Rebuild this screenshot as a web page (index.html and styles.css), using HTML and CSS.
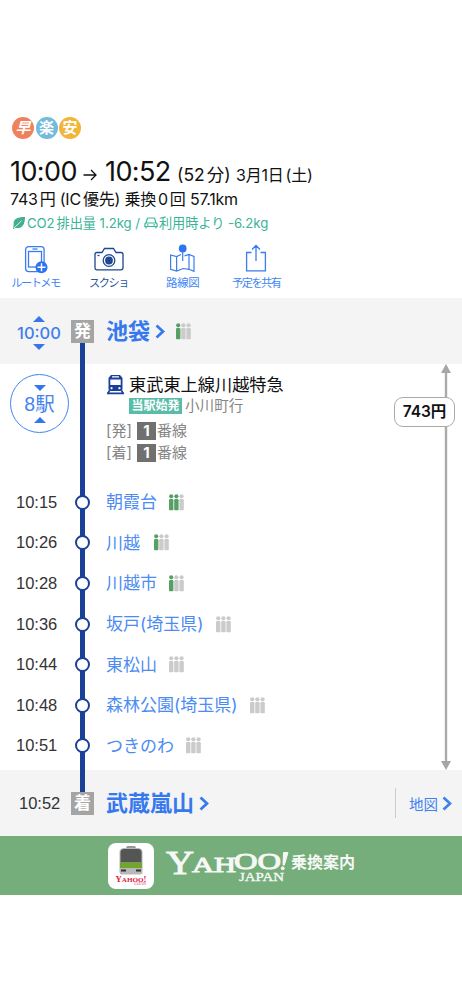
FILE: index.html
```html
<!DOCTYPE html>
<html lang="ja">
<head>
<meta charset="utf-8">
<title>乗換案内</title>
<link rel="stylesheet" href="styles.css">
</head>
<body>
<svg class="defs" width="0" height="0" aria-hidden="true">
  <defs>
    <g id="person"><circle cx="2.2" cy="2.3" r="2.1"/><path d="M0 6.2Q0 5 1.2 5h2Q4.400 5 4.400 6.200V15.500q0 .8-.8.8H.8q-.8 0-.8-.8z"/></g>
    <path id="chevron" d="M1.500 1.500 8 7.500 1.500 13.500" fill="none" stroke="currentColor" stroke-width="2.700"/>
  </defs>
</svg>
<main class="route">
  <header class="summary">
    <div class="tags"><span class="tag fast"><i>早</i></span><span class="tag easy">楽</span><span class="tag cheap">安</span></div>
    <div class="times">
      <span class="clock dep">10:00</span>
      <svg class="arrow" width="14" height="12" viewBox="0 0 14 12" fill="none" stroke="#111" stroke-width="1.300"><path d="M.5 6H13M8 1l5 5-5 5"/></svg>
      <span class="clock arr">10:52</span>
      <span class="duration">(52<b class="gap"></b>分)</span>
      <span class="date">3月1日<b class="gap"></b>(土)</span>
    </div>
    <div class="fare-line">743<b class="gap"></b>円 (IC<b class="gap"></b>優先) 乗換<b class="gap"></b>0<b class="gap"></b>回 57.1km</div>
    <div class="eco">
      <svg width="12" height="12" viewBox="0 0 12 12"><path d="M12 0C4 0 0 2 .7 7.500L0 12l2.500-1C9 12 12 8 12 0z" fill="#43ae91"/><path d="M1 11 8.500 3.800" stroke="#fff" stroke-width=".8"/></svg>
      <span class="co2">CO2<b class="gap"></b>排出量 1.2kg /</span>
      <svg class="car" width="14" height="12" viewBox="0 0 14 12" fill="none" stroke="#36b69a" stroke-width="1.200"><path d="M2 6 3.300 1.600Q3.500 1 4.200 1h5.600q.7 0 .9.600L12 6M1.500 6h11l.6 1v2.500H.9V7zM2 9.500v2M12 9.500v2M3 7.800h1.500M9.500 7.800H11"/></svg>
      <span class="saving">利用時より -6.2kg</span>
    </div>
  </header>

  <nav class="tools">
    <a class="tool">
      <svg width="28" height="30" viewBox="0 0 28 30" fill="none" stroke="#3b7cf0" stroke-width="1.300"><rect x="3.600" y="2.600" width="18.500" height="25" rx="3"/><rect x="6.500" y="7.500" width="13" height="15.500"/><path d="M10.500 5h5"/><circle cx="19.500" cy="23.300" r="6" fill="#2f74ef" stroke="none"/><path d="M19.500 19.300v8M15.500 23.300h8" stroke="#fff" stroke-width="1.400"/></svg>
      <span class="lbl tight">ルートメモ</span>
    </a>
    <a class="tool dark">
      <svg width="30" height="30" viewBox="0 0 30 30" fill="none" stroke="#1c4791" stroke-width="1.300"><path d="M3 8.500h5l2.500-4h9l2.500 4h5q2 0 2 2v13.300q0 2-2 2H3q-2 0-2-2V10.500q0-2 2-2z"/><circle cx="15" cy="16.500" r="5.800"/><circle cx="15" cy="16.500" r="3.900" fill="#1c4791" stroke="none"/><path d="M3.500 11.500h2"/></svg>
      <span class="lbl tight">スクショ</span>
    </a>
    <a class="tool">
      <svg width="28" height="30" viewBox="0 0 28 30" fill="none" stroke="#3b7cf0" stroke-width="1.200"><path d="M12 10.500l-4.400 2L1.600 11v14.200L7.600 27l6.600-2.500 5.800 .8 5 2V12.500L20 10.500l-4.500 1.300M7.600 12.500V27M20 10.500v15"/><circle cx="13.700" cy="4.500" r="3.900" fill="#2f74ef" stroke="none"/><path d="M13.700 7v10"/></svg>
      <span class="lbl">路線図</span>
    </a>
    <a class="tool">
      <svg width="28" height="30" viewBox="0 0 28 30" fill="none" stroke="#3b7cf0" stroke-width="1.300"><path d="M9.500 8.500H4.600v18.300h18.800V8.500h-4.900M14 17V1.500M10 5.500l4-4 4 4"/></svg>
      <span class="lbl tight">予定を共有</span>
    </a>
  </nav>

  <section class="stop origin">
    <div class="adjust">
      <svg width="12" height="6" viewBox="0 0 12 6"><path d="M0 6 6 0l6 6z" fill="#3476ee"/></svg>
      <span>10:00</span>
      <svg width="12" height="6" viewBox="0 0 12 6"><path d="M0 0h12L6 6z" fill="#3476ee"/></svg>
    </div>
    <span class="mark">発</span>
    <strong class="name">池袋</strong>
    <svg class="chev" width="10" height="15"><use href="#chevron"/></svg>
    <svg class="crowd lv1" width="15" height="17"><use href="#person"/><use href="#person" x="5.200"/><use href="#person" x="10.400"/></svg>
  </section>

  <section class="leg">
    <div class="detail">
      <div class="train">
        <div class="count">
          <svg width="12" height="6" viewBox="0 0 12 6"><path d="M0 0h12L6 6z" fill="#3476ee"/></svg>
          <span>8駅</span>
          <svg width="12" height="6" viewBox="0 0 12 6"><path d="M0 6 6 0l6 6z" fill="#3476ee"/></svg>
        </div>
        <div class="info">
          <div class="line-name">
            <svg width="19" height="20" viewBox="0 0 19 20"><path fill="#1b4098" fill-rule="evenodd" d="M5 0h9l2.500 3V14q0 2-2 2h-10q-2 0-2-2V3zM6 1.300v1.200h7V1.300zM4.300 4.500V10h10.400V4.500zM5.500 12a1.100 1.100 0 1 0 .1 0M13.400 12a1.100 1.100 0 1 0 .1 0"/><path d="M3.500 15.500 1.500 19M15.500 15.500l2 3.500M1 18.400h17" stroke="#1b4098" stroke-width="1.600"/></svg>
            <span>東武東上線川越特急</span>
          </div>
          <div class="bound"><span class="badge">当駅始発</span><span>小川町行</span></div>
          <div class="platform"><span class="pf">[発]</span><b>1</b><span>番線</span></div>
          <div class="platform"><span class="pf">[着]</span><b>1</b><span>番線</span></div>
        </div>
      </div>
      <ul class="stations">
        <li><time>10:15</time><i class="dot"></i><a>朝霞台</a><svg class="crowd lv2" width="15" height="17"><use href="#person"/><use href="#person" x="5.200"/><use href="#person" x="10.400"/></svg></li>
        <li><time>10:26</time><i class="dot"></i><a>川越</a><svg class="crowd lv1 near" width="15" height="17"><use href="#person"/><use href="#person" x="5.200"/><use href="#person" x="10.400"/></svg></li>
        <li><time>10:28</time><i class="dot"></i><a>川越市</a><svg class="crowd lv1" width="15" height="17"><use href="#person"/><use href="#person" x="5.200"/><use href="#person" x="10.400"/></svg></li>
        <li><time>10:36</time><i class="dot"></i><a>坂戸(埼玉県)</a><svg class="crowd wide" width="15" height="17"><use href="#person"/><use href="#person" x="5.200"/><use href="#person" x="10.400"/></svg></li>
        <li><time>10:44</time><i class="dot"></i><a>東松山</a><svg class="crowd" width="15" height="17"><use href="#person"/><use href="#person" x="5.200"/><use href="#person" x="10.400"/></svg></li>
        <li><time>10:48</time><i class="dot"></i><a>森林公園(埼玉県)</a><svg class="crowd wide" width="15" height="17"><use href="#person"/><use href="#person" x="5.200"/><use href="#person" x="10.400"/></svg></li>
        <li><time>10:51</time><i class="dot"></i><a>つきのわ</a><svg class="crowd" width="15" height="17"><use href="#person"/><use href="#person" x="5.200"/><use href="#person" x="10.400"/></svg></li>
      </ul>
    </div>
    <aside class="fare">
      <svg class="span" width="10" height="406" viewBox="0 0 10 406"><path d="M5 5v396" stroke="#aaa" stroke-width="2.400"/><path d="M5 0l5 9H0zM5 406l-5-9h10z" fill="#a6a6a6"/></svg>
      <span class="price">743円</span>
    </aside>
  </section>

  <section class="stop terminus">
    <time>10:52</time>
    <span class="mark">着</span>
    <strong class="name">武蔵嵐山</strong>
    <svg class="chev" width="10" height="15"><use href="#chevron"/></svg>
    <a class="map">地図<svg width="10" height="15"><use href="#chevron"/></svg></a>
  </section>

  <footer class="banner">
    <div class="app">
      <svg width="46" height="46" viewBox="0 0 46 46">
        <path d="M19 3h8l1 2h-10z" fill="#999"/><path d="M11.500 9q0-3.500 4-4h15q4 .5 4 4v20q0 2.500-2.500 2.500H14q-2.500 0-2.500-2.500z" fill="#b8b8b8"/><path d="M12.500 9.500q0-3.500 3.500-3.500h14q3.500 0 3.500 3.500v10h-21z" fill="#555"/><path d="M12 19.500h22V25H12z" fill="#72a52e"/><path d="M13 26.500h5v2h-5zM28 26.500h5v2h-5z" fill="#333"/>
        <text class="mini" x="7.500" y="39" textLength="31" lengthAdjust="spacingAndGlyphs">Y<tspan class="minis">AHOO</tspan>!</text><text class="micro" x="26" y="42.300" textLength="12" lengthAdjust="spacingAndGlyphs">JAPAN</text>
      </svg>
    </div>
    <svg class="logo" width="123" height="38" viewBox="0 0 123 38" fill="#f6f8f6" stroke="#f6f8f6">
      <text class="wy" x="0" y="25" textLength="28" lengthAdjust="spacingAndGlyphs">Y</text>
      <text class="wa" x="26" y="23" textLength="44" lengthAdjust="spacingAndGlyphs">AH</text>
      <text class="wo" x="68" y="20" textLength="47" lengthAdjust="spacingAndGlyphs">OO</text>
      <path d="M117.500 3.500h4.500l-3.600 12.500h-1.400z"/><circle cx="116.700" cy="19.300" r="1.500"/>
      <text class="wj" x="73" y="31.500" textLength="45" lengthAdjust="spacingAndGlyphs">JAPAN</text>
    </svg>
    <span class="service">乗換案内</span>
  </footer>
</main>
</body>
</html>
```
FILE: styles.css
```css
* { box-sizing: border-box; }
body {
  margin: 0;
  background: #fff;
  color: #111;
  font-family: "Inter", "Noto Sans CJK JP", sans-serif;
}
svg { display: block; flex: none; }
span, a, strong { white-space: nowrap; }
.defs { height: 0; }
.route { padding-top: 116px; width: 462px; }
.gap { display: inline-block; width: 2px; }

.summary { height: 123px; padding-left: 10px; }
.tags { display: flex; gap: 1.500px; padding-left: 2px; height: 24px; align-items: center; }
.tag {
  width: 22px; height: 22px; border-radius: 50%;
  color: #fff; font-weight: 700; font-size: 15px; line-height: 21px; text-align: center;
}
.fast { background: #ef825d; }
.easy { background: #71bbdb; }
.cheap { background: #f1b538; }
.times { display: flex; align-items: baseline; height: 34px; margin-top: 15px; line-height: 34px; }
.clock { font-size: 27px; width: 67px; letter-spacing: -.6px; }
.arrow { margin: 0 8px 0 6px; align-self: center; position: relative; top: 3px; }
.duration { font-size: 17.500px; margin-left: 5px; width: 59px; }
.date { font-size: 16px; letter-spacing: -.2px; }
.fare-line { font-size: 16px; line-height: 24px; margin-top: -2px; white-space: nowrap; letter-spacing: -.22px; }
.eco { display: flex; align-items: center; height: 22px; font-size: 13.200px; line-height: 22px; color: #38b497; padding-left: 3px; letter-spacing: -.06px; margin-top: 1px; }
.co2 { margin-left: 2px; }
.car { margin: 0 1px 0 4px; }

.tools { display: flex; height: 59px; padding: 5px 0 0; }
.tool { width: 73.500px; display: flex; flex-direction: column; align-items: center; color: #4286f3; }
.tool:first-child { width: 71px; }
.tool.dark { color: #2c5599; width: 75px; }
.lbl { font-size: 11.500px; line-height: 17px; margin-top: 1px; letter-spacing: -.3px; }
.lbl.tight { font-size: 11.200px; letter-spacing: -1.500px; }

.stop { display: flex; align-items: center; height: 66px; background: no-repeat #f4f4f4; }
.origin { background-image: linear-gradient(#1b4098, #1b4098); background-size: 5px 30px; background-position: 80px 100%; }
.terminus { background-image: linear-gradient(#1b4098, #1b4098); background-size: 5px 30px; background-position: 80px 0; }
.adjust { width: 71px; padding-left: 7px; display: flex; flex-direction: column; align-items: center; gap: 2px; padding-top: 3px; }
.adjust span { font-size: 16.500px; line-height: 18px; font-weight: 500; color: #3c7ff1; }
.mark { width: 23px; height: 23px; background: #a4a4a4; color: #fff; font-weight: 700; font-size: 17px; line-height: 22px; text-align: center; margin-right: 12px; }
.name { font-size: 22px; line-height: 30px; color: #3678ee; font-weight: 700; }
.chev { color: #3678ee; margin-left: 5px; }
.crowd { fill: #cbcbcb; margin-left: 12px; }
.stop .crowd { margin-left: 11px; }
.lv1 use:first-child, .lv2 use:nth-child(-n+2) { fill: #57a064; }

.leg { display: flex; height: 406px; background: linear-gradient(#1b4098, #1b4098) 80px 0 / 5px 100% no-repeat; }
.detail { width: 394px; }
.train { display: flex; height: 118px; padding: 10px 0 0 10px; }
.count {
  width: 59px; height: 59px; border: 1.500px solid #4384f1; border-radius: 50%; color: #4384f1;
  display: flex; flex-direction: column; align-items: center; justify-content: center; margin-right: 37px;
}
.count span { font-size: 19.500px; line-height: 26px; font-family: "Liberation Sans", "Noto Sans CJK JP", sans-serif; }
.line-name { display: flex; align-items: center; height: 22px; font-size: 17.200px; line-height: 22px; gap: 4px; }
.bound { display: flex; align-items: center; height: 19px; padding-left: 23px; color: #858585; font-size: 14.600px; line-height: 18px; gap: 3px; }
.badge { background: #57bda9; color: #fff; font-size: 12px; font-weight: 700; width: 53px; height: 16px; line-height: 15px; text-align: center; }
.platform { display: flex; align-items: center; height: 22px; font-size: 15px; line-height: 20px; color: #858585; }
.bound + .platform { margin-top: 5px; }
.pf { width: 31px; }
.platform b { background: #707070; color: #fff; width: 19px; height: 18px; line-height: 18px; text-align: center; margin-right: 1px; }
.stations { list-style: none; margin: 0; padding: 0; }
.stations li { display: flex; align-items: center; height: 40.600px; }
time { font: 16.500px "Liberation Sans", sans-serif; color: #333; }
.stations time { width: 75px; padding-left: 16px; }
.dot { width: 15px; height: 15px; border: 2.500px solid #1b4098; background: #fff; border-radius: 50%; margin-right: 16px; }
.stations a { font-size: 17px; line-height: 24px; color: #4c8bf3; }
.near { margin-left: 14px; }
.wide { margin-left: 13px; }
.fare { position: relative; width: 68px; padding-top: 33px; }
.span { position: absolute; left: 47px; top: 0; }
.price {
  position: relative; display: block; width: 61px; height: 30px; border: 1px solid #aaa; border-radius: 9px;
  background: #fff; text-align: center; font-size: 15.500px; line-height: 28px; font-weight: 600; color: #111;
}
.terminus time { width: 71px; padding-left: 19px; }
.map { margin-left: auto; display: flex; align-items: center; gap: 4px; height: 30px; border-left: 1px solid #ccc; width: 67px; padding-left: 13px; font-size: 14.500px; color: #3f80f2; }

.banner { display: flex; height: 59px; background: #75ae7b; padding: 7px 0 0 108px; }
.app { width: 46px; height: 46px; background: #fff; border-radius: 8px; margin-right: 12px; }
.logo { margin-top: 6px; overflow: visible; }
.logo text { font-family: "Liberation Serif", serif; stroke-width: 1; }
.logo .wy { font-size: 33px; }
.logo .wa { font-size: 22px; }
.logo .wo { font-size: 24px; }
.logo .wj { font-size: 13px; stroke-width: .35; }
.mini { font: 700 8.500px "Liberation Serif", serif; fill: #e0203f; }
.minis { font-size: 7px; }
.micro { font: 3.500px "Liberation Serif", serif; fill: #d9304f; }
.service { color: #f5f8f5; font-size: 16px; font-weight: 700; line-height: 24px; margin: 7px 0 0 2px; }
```
